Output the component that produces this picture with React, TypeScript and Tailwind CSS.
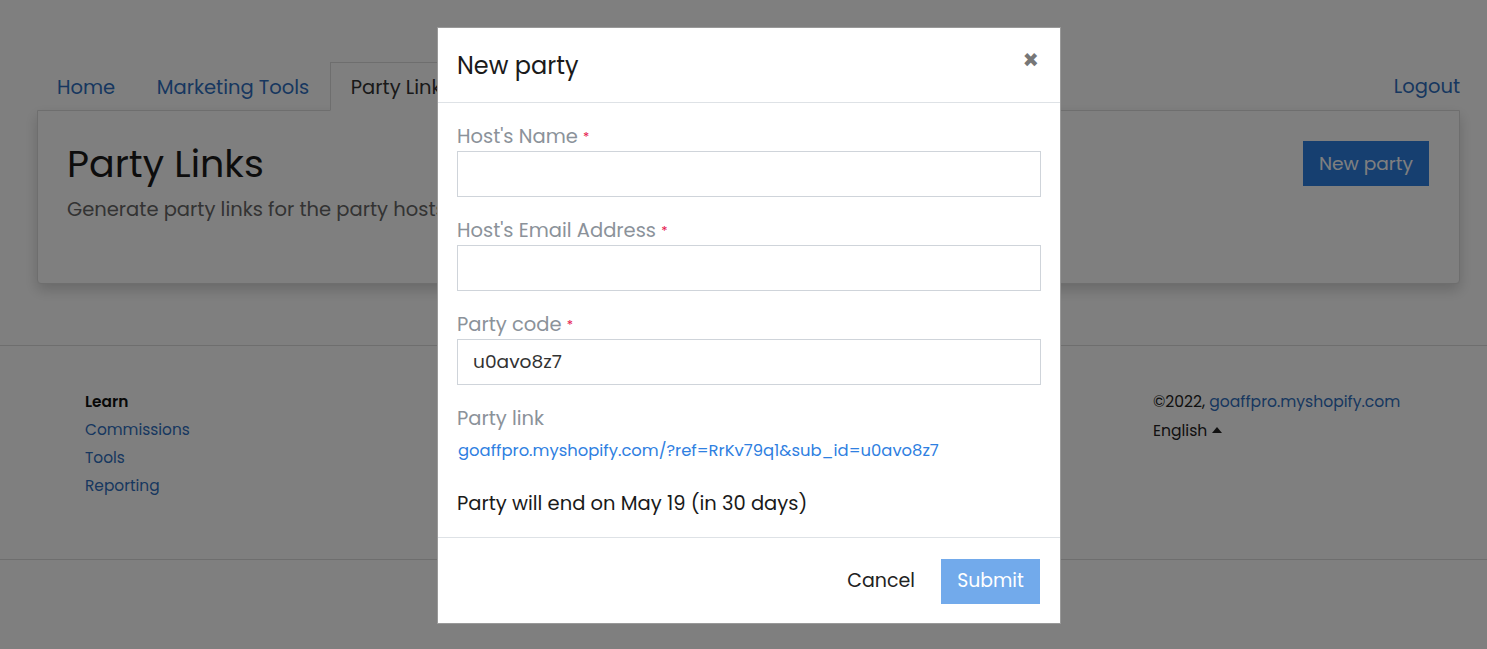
import React from "react";

const font = "font-['Poppins','Open_Sans','Noto_Sans',sans-serif]";

function Tab({ label, active }: { label: string; active?: boolean }) {
    return (
        <div
            className={`pl-[20px] pr-[19.5px] h-[49px] flex items-center text-[19.5px] pt-[3px] -mb-px ${
                active
                    ? "bg-white border border-[#dcdcdc] border-b-white text-[#333]"
                    : "text-[#2f6fc0] border border-transparent"
            }`}
        >
            {label}
        </div>
    );
}

function Field({ label, value }: { label: string; value?: string }) {
    return (
        <div className="mb-[21px]">
            <div className="text-[19.5px] text-[#8b929a] leading-[26px] mb-[1px]">
                {label} <span className="text-[#e5134a] text-[13px] align-top">*</span>
            </div>
            <div className="h-[46px] border border-[#cfd4da] flex items-center px-[15px] text-[18.6px] text-[#333]">
                {value}
            </div>
        </div>
    );
}

export default function App() {
    return (
        <div className={`relative min-h-[649px] bg-white overflow-hidden ${font}`}>
            {/* page */}
            <div className="pt-[61px] ml-[36px] mr-[27px]">
                <div className="flex items-end justify-between">
                    <div className="flex">
                        <Tab label="Home" />
                        <Tab label="Marketing Tools" />
                        <Tab label="Party Links" active />
                    </div>
                    <div className="text-[19.5px] text-[#2f6fc0] h-[49px] pt-[3px] flex items-center">
                        Logout
                    </div>
                </div>
                <div className="ml-px bg-white border border-[#dcdcdc] rounded-b-[4px] shadow-[0_6px_14px_rgba(0,0,0,0.18)] h-[174px] px-[30px] pt-[30px] flex justify-between">
                    <div>
                        <div className="text-[38px] leading-[46px] text-[#1a1a1a] -ml-px">Party Links</div>
                        <div className="text-[19.5px] text-[#666] mt-[8px] -ml-px">
                            Generate party links for the party hosts
                        </div>
                    </div>
                    <div className="h-[45px] px-[16px] bg-[#2c7ee0] text-white text-[18.6px] flex items-center">
                        New party
                    </div>
                </div>
            </div>

            <div className="mt-[61px] border-t border-b border-[#dcdcdc] h-[215px] flex justify-between pl-[85px] pr-[86px] pt-[42px]">
                <div className="text-[15.4px] leading-[28px]">
                    <div className="font-semibold text-[#111]">Learn</div>
                    <div className="text-[#2f6fc0]">Commissions</div>
                    <div className="text-[#2f6fc0]">Tools</div>
                    <div className="text-[#2f6fc0]">Reporting</div>
                </div>
                <div className="text-[15.6px] leading-[28px] w-[248px]">
                    <div className="text-[#222] whitespace-nowrap">
                        ©2022, <span className="text-[#2f6fc0]">goaffpro.myshopify.com</span>
                    </div>
                    <div className="text-[#222] flex items-center gap-[5px] pt-px">
                        English
                        <svg width="10" height="6" viewBox="0 0 10 6" className="-mt-[3px]">
                            <path d="M0 6 L5 0 L10 6 Z" fill="#222" />
                        </svg>
                    </div>
                </div>
            </div>

            {/* overlay */}
            <div className="absolute inset-0 bg-black/50" />

            {/* modal */}
            <div className="absolute left-[437px] top-[27px] w-[624px] h-[597px] bg-white border border-[#999] flex flex-col">
                <div className="h-[75px] shrink-0 border-b border-[#dee2e6] flex items-center justify-between pl-[19px] pr-[21px]">
                    <div className="text-[24px] text-[#1a1a1a] mt-[1px]">New party</div>
                    <div className="text-[26px] font-bold text-[#777] -mt-[10px]">×</div>
                </div>
                <div className="px-[19px] pt-[21px] flex-1 border-b border-[#dee2e6]">
                    <Field label="Host's Name" />
                    <Field label="Host's Email Address" />
                    <Field label="Party code" value="u0avo8z7" />
                    <div className="text-[19.5px] text-[#8b929a] leading-[26px]">Party link</div>
                    <div className="text-[16.4px] leading-[24px] text-[#2f80e1] mt-[7px] ml-px">
                        goaffpro.myshopify.com/?ref=RrKv79q1&amp;sub_id=u0avo8z7
                    </div>
                    <div className="text-[19.5px] leading-[26px] text-[#1a1a1a] mt-[28px]">
                        Party will end on May 19 (in 30 days)
                    </div>
                </div>
                <div className="h-[85px] shrink-0 flex items-center justify-end gap-[26px] pr-[20px] pt-px">
                    <div className="text-[19px] text-[#222]">Cancel</div>
                    <div className="h-[45px] w-[99px] bg-[#72aaeb] text-white text-[18.8px] flex items-center justify-center">
                        Submit
                    </div>
                </div>
            </div>
        </div>
    );
}
